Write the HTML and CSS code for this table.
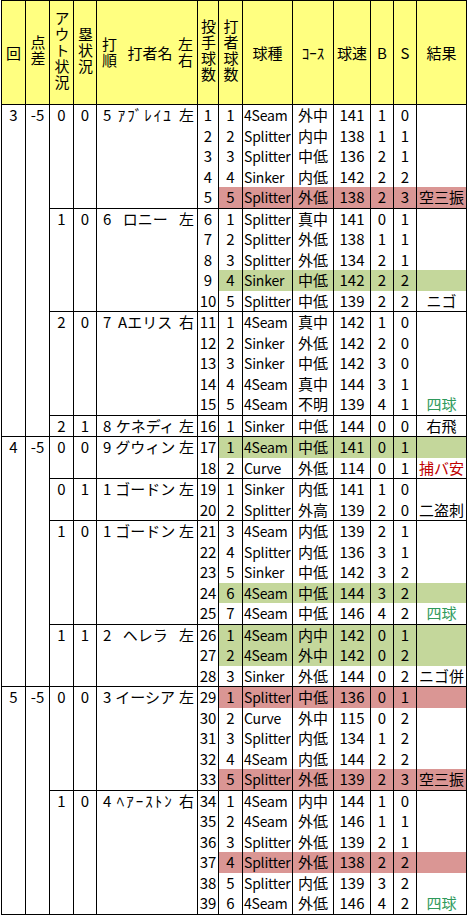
FILE: index.html
```html
<!DOCTYPE html>
<html lang="ja">
<head>
<meta charset="utf-8">
<title>投球記録</title>
<link rel="stylesheet" href="styles.css">
</head>
<body>
<table class="log">
<colgroup>
<col class="w24"><col class="w24"><col class="w24"><col class="w23"><col class="w101"><col class="w21"><col class="w24"><col class="w50"><col class="w41"><col class="w37"><col class="w23"><col class="w23"><col class="w50">
</colgroup>
<thead>
<tr>
<th>回</th>
<th><span class="vt">点差</span></th>
<th><span class="vt">アウト状況</span></th>
<th><span class="vt">塁状況</span></th>
<th><div class="bat hbat"><span class="vt">打順</span><span class="nm">打者名</span><span class="vt">左右</span></div></th>
<th><span class="vt">投手球数</span></th>
<th><span class="vt">打者球数</span></th>
<th>球種</th>
<th>ｺｰｽ</th>
<th>球速</th>
<th>B</th>
<th>S</th>
<th>結果</th>
</tr>
</thead>
<tbody>
<tr class="ab"><td rowspan="16">3</td><td rowspan="16">-5</td><td rowspan="5">0</td><td rowspan="5">0</td><td rowspan="5"><div class="bat"><span class="bo">5</span><span class="nm hw">ｱﾌﾞﾚｲﾕ</span><span class="lr">左</span></div></td><td>1</td><td>1</td><td class="pt">4Seam</td><td>外中</td><td>141</td><td>1</td><td>0</td><td></td></tr>
<tr><td>2</td><td>2</td><td class="pt">Splitter</td><td>内中</td><td>138</td><td>1</td><td>1</td><td></td></tr>
<tr><td>3</td><td>3</td><td class="pt">Splitter</td><td>中低</td><td>136</td><td>2</td><td>1</td><td></td></tr>
<tr><td>4</td><td>4</td><td class="pt">Sinker</td><td>内低</td><td>142</td><td>2</td><td>2</td><td></td></tr>
<tr class="r"><td>5</td><td>5</td><td class="pt">Splitter</td><td>外低</td><td>138</td><td>2</td><td>3</td><td>空三振</td></tr>

<tr class="ab"><td rowspan="5">1</td><td rowspan="5">0</td><td rowspan="5"><div class="bat"><span class="bo">6</span><span class="nm">ロニー</span><span class="lr">左</span></div></td><td>6</td><td>1</td><td class="pt">Splitter</td><td>真中</td><td>141</td><td>0</td><td>1</td><td></td></tr>
<tr><td>7</td><td>2</td><td class="pt">Splitter</td><td>外低</td><td>138</td><td>1</td><td>1</td><td></td></tr>
<tr><td>8</td><td>3</td><td class="pt">Splitter</td><td>外低</td><td>134</td><td>2</td><td>1</td><td></td></tr>
<tr class="g"><td>9</td><td>4</td><td class="pt">Sinker</td><td>中低</td><td>142</td><td>2</td><td>2</td><td></td></tr>
<tr><td>10</td><td>5</td><td class="pt">Splitter</td><td>中低</td><td>139</td><td>2</td><td>2</td><td>ニゴ</td></tr>

<tr class="ab"><td rowspan="5">2</td><td rowspan="5">0</td><td rowspan="5"><div class="bat"><span class="bo">7</span><span class="nm">Aエリス</span><span class="lr">右</span></div></td><td>11</td><td>1</td><td class="pt">4Seam</td><td>真中</td><td>142</td><td>1</td><td>0</td><td></td></tr>
<tr><td>12</td><td>2</td><td class="pt">Sinker</td><td>外低</td><td>142</td><td>2</td><td>0</td><td></td></tr>
<tr><td>13</td><td>3</td><td class="pt">Sinker</td><td>中低</td><td>142</td><td>3</td><td>0</td><td></td></tr>
<tr><td>14</td><td>4</td><td class="pt">4Seam</td><td>真中</td><td>144</td><td>3</td><td>1</td><td></td></tr>
<tr><td>15</td><td>5</td><td class="pt">4Seam</td><td>不明</td><td>139</td><td>4</td><td>1</td><td class="bb">四球</td></tr>

<tr class="ab"><td>2</td><td>1</td><td><div class="bat"><span class="bo">8</span><span class="nm">ケネディ</span><span class="lr">左</span></div></td><td>16</td><td>1</td><td class="pt">Sinker</td><td>中低</td><td>144</td><td>0</td><td>0</td><td>右飛</td></tr>

<tr class="ab g"><td rowspan="12">4</td><td rowspan="12">-5</td><td rowspan="2">0</td><td rowspan="2">0</td><td rowspan="2"><div class="bat"><span class="bo">9</span><span class="nm">グウィン</span><span class="lr">左</span></div></td><td>17</td><td>1</td><td class="pt">4Seam</td><td>中低</td><td>141</td><td>0</td><td>1</td><td></td></tr>
<tr><td>18</td><td>2</td><td class="pt">Curve</td><td>外低</td><td>114</td><td>0</td><td>1</td><td class="hit">捕バ安</td></tr>

<tr class="ab"><td rowspan="2">0</td><td rowspan="2">1</td><td rowspan="2"><div class="bat"><span class="bo">1</span><span class="nm">ゴードン</span><span class="lr">左</span></div></td><td>19</td><td>1</td><td class="pt">Sinker</td><td>内低</td><td>141</td><td>1</td><td>0</td><td></td></tr>
<tr><td>20</td><td>2</td><td class="pt">Splitter</td><td>外高</td><td>139</td><td>2</td><td>0</td><td>二盗刺</td></tr>

<tr class="ab"><td rowspan="5">1</td><td rowspan="5">0</td><td rowspan="5"><div class="bat"><span class="bo">1</span><span class="nm">ゴードン</span><span class="lr">左</span></div></td><td>21</td><td>3</td><td class="pt">4Seam</td><td>内低</td><td>139</td><td>2</td><td>1</td><td></td></tr>
<tr><td>22</td><td>4</td><td class="pt">Splitter</td><td>内低</td><td>136</td><td>3</td><td>1</td><td></td></tr>
<tr><td>23</td><td>5</td><td class="pt">Sinker</td><td>中低</td><td>142</td><td>3</td><td>2</td><td></td></tr>
<tr class="g"><td>24</td><td>6</td><td class="pt">4Seam</td><td>中低</td><td>144</td><td>3</td><td>2</td><td></td></tr>
<tr><td>25</td><td>7</td><td class="pt">4Seam</td><td>中低</td><td>146</td><td>4</td><td>2</td><td class="bb">四球</td></tr>

<tr class="ab g"><td rowspan="3">1</td><td rowspan="3">1</td><td rowspan="3"><div class="bat"><span class="bo">2</span><span class="nm">ヘレラ</span><span class="lr">左</span></div></td><td>26</td><td>1</td><td class="pt">4Seam</td><td>内中</td><td>142</td><td>0</td><td>1</td><td></td></tr>
<tr class="g"><td>27</td><td>2</td><td class="pt">4Seam</td><td>外中</td><td>142</td><td>0</td><td>2</td><td></td></tr>
<tr><td>28</td><td>3</td><td class="pt">Sinker</td><td>外低</td><td>144</td><td>0</td><td>2</td><td>ニゴ併</td></tr>

<tr class="ab r"><td rowspan="11">5</td><td rowspan="11">-5</td><td rowspan="5">0</td><td rowspan="5">0</td><td rowspan="5"><div class="bat"><span class="bo">3</span><span class="nm">イーシア</span><span class="lr">左</span></div></td><td>29</td><td>1</td><td class="pt">Splitter</td><td>中低</td><td>136</td><td>0</td><td>1</td><td></td></tr>
<tr><td>30</td><td>2</td><td class="pt">Curve</td><td>外中</td><td>115</td><td>0</td><td>2</td><td></td></tr>
<tr><td>31</td><td>3</td><td class="pt">Splitter</td><td>内低</td><td>134</td><td>1</td><td>2</td><td></td></tr>
<tr><td>32</td><td>4</td><td class="pt">4Seam</td><td>内低</td><td>144</td><td>2</td><td>2</td><td></td></tr>
<tr class="r"><td>33</td><td>5</td><td class="pt">Splitter</td><td>外低</td><td>139</td><td>2</td><td>3</td><td>空三振</td></tr>

<tr class="ab"><td rowspan="6">1</td><td rowspan="6">0</td><td rowspan="6"><div class="bat"><span class="bo">4</span><span class="nm hw">ﾍｱｰｽﾄﾝ</span><span class="lr">右</span></div></td><td>34</td><td>1</td><td class="pt">4Seam</td><td>内中</td><td>144</td><td>1</td><td>0</td><td></td></tr>
<tr><td>35</td><td>2</td><td class="pt">4Seam</td><td>外低</td><td>146</td><td>1</td><td>1</td><td></td></tr>
<tr><td>36</td><td>3</td><td class="pt">Splitter</td><td>外低</td><td>139</td><td>2</td><td>1</td><td></td></tr>
<tr class="r"><td>37</td><td>4</td><td class="pt">Splitter</td><td>外低</td><td>138</td><td>2</td><td>2</td><td></td></tr>
<tr><td>38</td><td>5</td><td class="pt">Splitter</td><td>内低</td><td>139</td><td>3</td><td>2</td><td></td></tr>
<tr><td>39</td><td>6</td><td class="pt">4Seam</td><td>外低</td><td>146</td><td>4</td><td>2</td><td class="bb">四球</td></tr>
</tbody>
</table>
</body>
</html>
```

FILE: styles.css
```css
html, body {
  margin: 0;
  padding: 0;
  background: #ffffff;
}

body {
  padding: 0 0 0 1px;
  font-family: "Noto Sans CJK JP", "Noto Sans", sans-serif;
  font-size: 15px;
  color: #000000;
}

.log {
  border-collapse: collapse;
  table-layout: fixed;
  width: 465px;
  border: 1px solid #000000;
}

.w21 { width: 21px; }
.w23 { width: 23px; }
.w24 { width: 24px; }
.w37 { width: 37px; }
.w41 { width: 41px; }
.w50 { width: 50px; }
.w101 { width: 101px; }

.log th {
  height: 103px;
  padding: 0;
  background: #ffff80;
  border: 1px solid #000000;
  font-weight: normal;
  line-height: 18px;
  text-align: center;
  vertical-align: middle;
  white-space: nowrap;
  overflow: hidden;
}

.vt {
  display: inline-block;
  writing-mode: vertical-rl;
  text-orientation: upright;
  letter-spacing: 1px;
  line-height: 18px;
}

.log td {
  height: 20.5px;
  padding: 0;
  border-left: 1px solid #000000;
  border-right: 1px solid #000000;
  line-height: 20px;
  text-align: center;
  vertical-align: top;
  white-space: nowrap;
  overflow: hidden;
}

.log tr.ab > td {
  border-top: 1px solid #000000;
}

.bat {
  display: flex;
  align-items: center;
  padding: 0 3px 0 6px;
}

.bat .bo,
.bat .lr {
  flex: none;
}

.bat .nm {
  flex: 1;
  min-width: 0;
  text-align: center;
}

.hbat {
  padding: 0 3px 0 3px;
}

.hbat .nm {
  padding-left: 6px;
}

.bat .hw {
  letter-spacing: 2px;
}

.log td.pt {
  text-align: left;
  padding-left: 1px;
  font-size: 14px;
  letter-spacing: -0.2px;
}

.log tr.r > td:nth-last-child(-n+7) {
  background: #da9694;
}

.log tr.g > td:nth-last-child(-n+7) {
  background: #c4d79b;
}

.log td.bb {
  color: #2f9a5c;
}

.log td.hit {
  color: #c00000;
}
```
